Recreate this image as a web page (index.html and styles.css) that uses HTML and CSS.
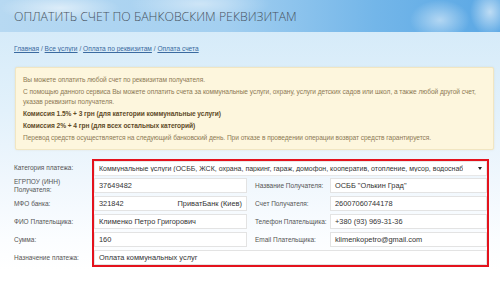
FILE: index.html
```html
<!DOCTYPE html>
<html lang="ru">
<head>
    <meta charset="UTF-8">
    <meta name="viewport" content="width=device-width, initial-scale=1.0">
    <title>Оплатить счет по банковским реквизитам</title>
    <link rel="stylesheet" href="styles.css">
</head>
<body>
    <header class="banner">
        <h1>Оплатить счет по банковским реквизитам</h1>
    </header>

    <div class="content">
        <nav class="crumbs">
            <a href="#">Главная</a> / <a href="#">Все услуги</a> / <a href="#">Оплата по реквизитам</a> / <a href="#">Оплата счета</a>
        </nav>

        <div class="notice">
            <p>Вы можете оплатить любой счет по реквизитам получателя.</p>
            <p>С помощью данного сервиса Вы можете оплатить счета за коммунальные услуги, охрану, услуги детских садов или школ, а также любой другой счет, указав реквизиты получателя.</p>
            <p class="strong">Комиссия 1.5% + 3 грн (для категории коммунальные услуги)</p>
            <p class="strong">Комиссия 2% + 4 грн (для всех остальных категорий)</p>
            <p>Перевод средств осуществляется на следующий банковский день. При отказе в проведении операции возврат средств гарантируется.</p>
        </div>

        <form class="pay-form">
            <div class="highlight"></div>

            <label class="label r1">Категория платежа:</label>
            <div class="field select wide r1">
                <span>Коммунальные услуги (ОСББ, ЖСК, охрана, паркинг, гараж, домофон, кооператив, отопление, мусор, водоснабжение)</span>
                <i class="arrow"></i>
            </div>

            <label class="label r2">ЕГРПОУ (ИНН)<br>Получателя:</label>
            <div class="field r2">37649482</div>
            <label class="label inner r2">Название Получателя:</label>
            <div class="field right r2">ОСББ "Олькин Град"</div>

            <label class="label r3">МФО банка:</label>
            <div class="field split r3"><span>321842</span><span>ПриватБанк (Киев)</span></div>
            <label class="label inner r3">Счет Получателя:</label>
            <div class="field right r3">26007060744178</div>

            <label class="label r4">ФИО Плательщика:</label>
            <div class="field r4">Клименко Петро Григорович</div>
            <label class="label inner r4">Телефон Плательщика:</label>
            <div class="field right r4">+380 (93) 969-31-36</div>

            <label class="label r5">Сумма:</label>
            <div class="field r5">160</div>
            <label class="label inner r5">Email Плательщика:</label>
            <div class="field right r5">klimenkopetro@gmail.com</div>

            <label class="label r6">Назначение платежа:</label>
            <div class="field wide r6">Оплата коммунальных услуг</div>
        </form>
    </div>
</body>
</html>
```

FILE: styles.css
```css
html {
    background-color: #fff;
}

body {
    margin: 0;
    padding: 0;
    min-height: 300px;
    font-family: 'Liberation Sans', Arial, sans-serif;
    background: #fff linear-gradient(to bottom, #d6ebf9 32px, #e2f1fb 110px, #f0f7fd 180px, #fbfdff 240px, #ffffff 270px) no-repeat;
    overflow: hidden;
}

.banner {
    height: 32px;
    padding: 0 14px;
    display: flex;
    align-items: center;
    background:
        radial-gradient(ellipse 60px 14px at 60px 8px, rgba(255, 255, 255, 0.55), transparent),
        radial-gradient(ellipse 70px 18px at 200px 4px, rgba(255, 255, 255, 0.45), transparent),
        radial-gradient(ellipse 30px 20px at 440px 20px, rgba(255, 255, 255, 0.5), transparent),
        radial-gradient(ellipse 20px 24px at 490px 12px, rgba(255, 255, 255, 0.6), transparent),
        linear-gradient(90deg, #b7d9f2 0%, #a3cff0 45%, #73b6e9 75%, #5aa7e4 100%);
}

.banner h1 {
    margin: 0;
    font-family: 'Open Sans', 'Liberation Sans', sans-serif;
    font-weight: 300;
    font-size: 12.3px;
    text-transform: uppercase;
    color: #48535f;
    padding-top: 1px;
}

.content {
    padding: 0 6px 0 14px;
}

.crumbs {
    height: 34px;
    line-height: 34px;
    font-size: 6.6px;
    color: #3c5f86;
}

.crumbs a {
    color: #3a6aa0;
    text-decoration: underline;
}

.notice {
    margin: 1px 0 0 1px;
    padding: 7px 7px 6px 7px;
    background-color: #fdf6dd;
    border: 1px solid #f1e6c2;
    border-radius: 2px;
    box-shadow: 0 0 2px rgba(200, 180, 120, 0.25);
    color: #8d7a55;
    font-size: 6.6px;
    letter-spacing: -0.05px;
    line-height: 10px;
}

.notice p {
    margin: 0 0 2px;
}

.notice p:last-child {
    margin-bottom: 0;
}

.notice .strong {
    font-weight: bold;
    color: #5f4b28;
}

.pay-form {
    margin-top: 9px;
    display: grid;
    grid-template-columns: 78px 156px 82px 159px;
    grid-template-rows: repeat(6, 18px);
    font-size: 7px;
}

.highlight {
    grid-column: 2 / 5;
    grid-row: 1 / 7;
    border: 2px solid #e4121c;
    z-index: 1;
    pointer-events: none;
}

.r1 { grid-row: 1; }
.r2 { grid-row: 2; }
.r3 { grid-row: 3; }
.r4 { grid-row: 4; }
.r5 { grid-row: 5; }
.r6 { grid-row: 6; }

.label {
    grid-column: 1;
    align-self: center;
    color: #555;
    font-size: 6.5px;
    line-height: 8px;
}

.label.inner {
    grid-column: 3;
    padding-left: 7px;
}

.field {
    grid-column: 2;
    margin: 1px 1px 2px 2px;
    padding: 0 4px;
    display: flex;
    align-items: center;
    background-color: #fff;
    border: 1px solid #e3e3e3;
    color: #333;
    font-size: 7.4px;
    white-space: nowrap;
    overflow: hidden;
}

.field.right {
    grid-column: 4;
    margin: 1px 2px 2px 0;
}

.field.wide {
    grid-column: 2 / 5;
    margin: 1px 2px 2px 2px;
}

.field.select {
    margin-top: 2px;
    margin-bottom: 1px;
    justify-content: space-between;
    border-color: #e8e8e8;
    font-size: 7px;
}

.field.select span {
    overflow: hidden;
    width: 364px;
}

.field.split {
    justify-content: space-between;
}

.arrow {
    width: 0;
    height: 0;
    border-left: 2px solid transparent;
    border-right: 2px solid transparent;
    border-top: 3px solid #222;
}
```
